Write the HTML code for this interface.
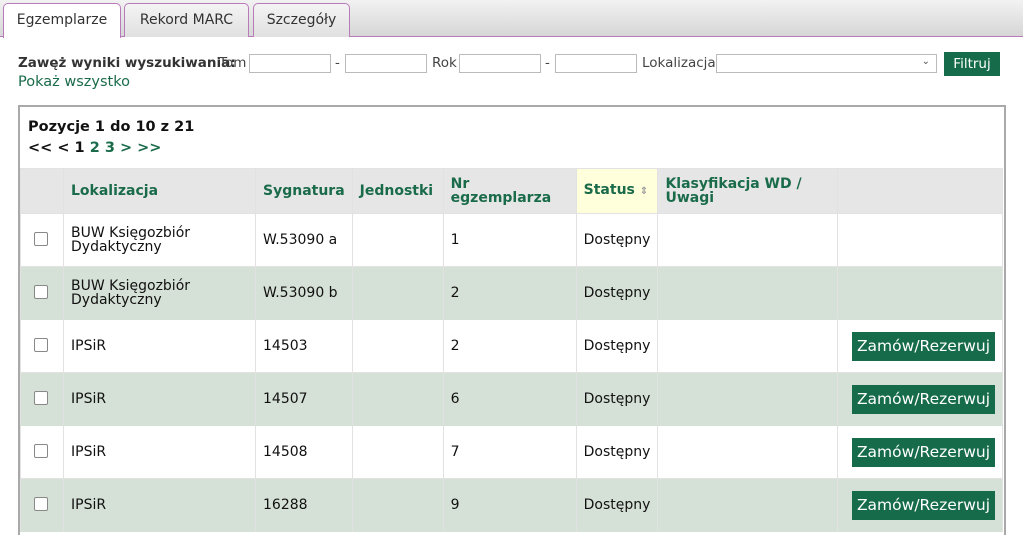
<!DOCTYPE html>
<html><head><meta charset="utf-8"><style>
*{box-sizing:border-box;margin:0;padding:0}
body{width:1023px;height:523px;overflow:hidden;background:#fff;font-family:"DejaVu Sans","Liberation Sans",sans-serif;font-size:14px;color:#111;position:relative}
.bar{position:absolute;left:0;top:0;width:1023px;height:37px;background:linear-gradient(#f2f2f2,#d6d6d6);border-bottom:1px solid #b87ab8}
.tab{position:absolute;top:3px;height:34px;border:1px solid #b87ab8;border-bottom:none;border-radius:5px 5px 0 0;background:linear-gradient(#f4f4f4,#e0e0e0);text-align:center;line-height:32px;font-size:14px;color:#333}
.tab.a{background:#fff;height:35px}
.abs{position:absolute}
.inp{position:absolute;top:54px;height:19px;border:1px solid #bbb;background:#fff}
.lbl{position:absolute;top:55px;color:#444;font-size:13.5px}
.btn{position:absolute;background:#156b4a;color:#fff;text-align:center}
.box{position:absolute;left:18px;top:105px;width:988px;height:430px;border:2px solid #a9a9a9;border-bottom:none}
table{position:absolute;left:20px;top:168px;border-collapse:collapse;width:983px}
td,th{border:1px solid #e2e2e2;padding:0 7px;text-align:left;vertical-align:middle}
th{background:#e6e6e6;color:#1a6b4a;font-weight:bold;height:45px;line-height:14px;font-size:14px}
td{height:53px;line-height:14px}
tr.e td{background:#d5e0d6;border-color:#d5e0d6 #e2e2e2}
.cb{display:inline-block;width:14px;height:14px;border:1px solid #888;background:#fff;margin-left:6px;border-radius:2px}
.zb{display:inline-block;background:#156b4a;color:#fff;padding:0 5px;height:29px;line-height:29px;font-size:15.5px;float:right}
</style></head><body>
<div class="bar"></div>
<div class="tab a" style="left:3px;width:118px">Egzemplarze</div>
<div class="tab" style="left:124px;width:125px">Rekord MARC</div>
<div class="tab" style="left:253px;width:97px">Szczegóły</div>

<div class="lbl" style="left:18px;color:#333"><b>Zawęż wyniki wyszukiwania:</b></div>
<div class="lbl" style="left:219px">Tom</div>
<div class="inp" style="left:249px;width:82px"></div>
<div class="lbl" style="left:335px">-</div>
<div class="inp" style="left:345px;width:82px"></div>
<div class="lbl" style="left:432px">Rok</div>
<div class="inp" style="left:459px;width:82px"></div>
<div class="lbl" style="left:545px">-</div>
<div class="inp" style="left:555px;width:82px"></div>
<div class="lbl" style="left:642px">Lokalizacja</div>
<div class="inp" style="left:716px;width:221px"><span style="position:absolute;right:6px;top:1px;font-size:10px;color:#555">&#8964;</span></div>
<div class="btn" style="left:944px;top:52px;width:56px;height:24px;line-height:24px;font-size:13.5px">Filtruj</div>
<div class="abs" style="left:18px;top:74px;color:#1a6b4a;font-size:14.5px">Pokaż wszystko</div>

<div class="box"></div>
<div class="abs" style="left:28px;top:119px;font-weight:bold;font-size:14.5px">Pozycje 1 do 10 z 21</div>
<div class="abs" style="left:28px;top:140px;font-weight:bold;font-size:14.5px">&lt;&lt; &lt; 1 <span style="color:#1a6b4a">2 3 &gt; &gt;&gt;</span></div>

<table>
<tr><th style="width:43px"></th><th style="width:192px">Lokalizacja</th><th style="width:96px">Sygnatura</th><th style="width:91px">Jednostki</th><th style="width:133px">Nr<br>egzemplarza</th><th style="width:80px;background:#ffffdc">Status <span style="color:#999;font-size:10px">&#8661;</span></th><th style="width:180px">Klasyfikacja WD /<br>Uwagi</th><th></th></tr>
<tr><td><span class="cb"></span></td><td>BUW Księgozbiór<br>Dydaktyczny</td><td>W.53090 a</td><td></td><td>1</td><td>Dostępny</td><td></td><td></td></tr>
<tr class="e"><td><span class="cb"></span></td><td>BUW Księgozbiór<br>Dydaktyczny</td><td>W.53090 b</td><td></td><td>2</td><td>Dostępny</td><td></td><td></td></tr>
<tr><td><span class="cb"></span></td><td>IPSiR</td><td>14503</td><td></td><td>2</td><td>Dostępny</td><td></td><td><span class="zb">Zamów/Rezerwuj</span></td></tr>
<tr class="e"><td><span class="cb"></span></td><td>IPSiR</td><td>14507</td><td></td><td>6</td><td>Dostępny</td><td></td><td><span class="zb">Zamów/Rezerwuj</span></td></tr>
<tr><td><span class="cb"></span></td><td>IPSiR</td><td>14508</td><td></td><td>7</td><td>Dostępny</td><td></td><td><span class="zb">Zamów/Rezerwuj</span></td></tr>
<tr class="e"><td><span class="cb"></span></td><td>IPSiR</td><td>16288</td><td></td><td>9</td><td>Dostępny</td><td></td><td><span class="zb">Zamów/Rezerwuj</span></td></tr>
</table>
</body></html>
